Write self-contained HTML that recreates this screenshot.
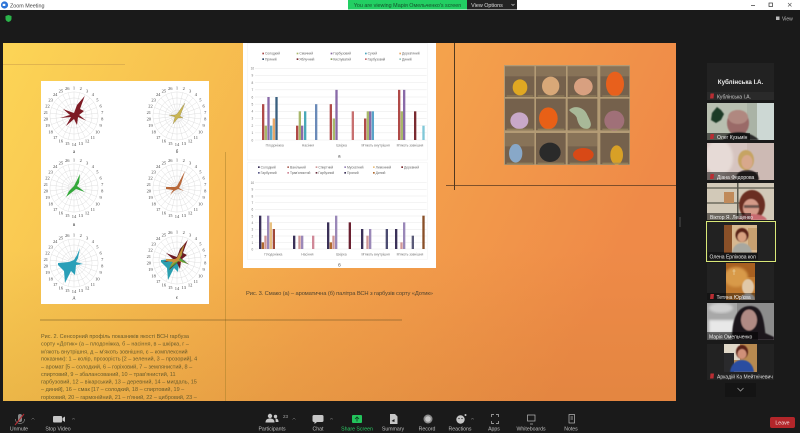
<!DOCTYPE html>
<html><head><meta charset="utf-8"><title>Zoom Meeting</title>
<style>
html,body{margin:0;padding:0;width:800px;height:433px;overflow:hidden;background:#1a1a1a}
svg{display:block;font-family:"Liberation Sans","Noto Sans CJK SC",sans-serif}
</style></head><body>
<svg width="800" height="433" viewBox="0 0 800 433" xmlns="http://www.w3.org/2000/svg">
<defs>
<linearGradient id="sl" x1="0" y1="0" x2="1" y2="0.25">
<stop offset="0" stop-color="#fcd556"/><stop offset=".3" stop-color="#f7bf4f"/><stop offset=".62" stop-color="#f4a24c"/><stop offset="1" stop-color="#ef8a48"/>
</linearGradient>
<linearGradient id="dk" x1="0" y1="0" x2="0" y2="1"><stop offset="0" stop-color="#a8701a" stop-opacity="0"/><stop offset="1" stop-color="#a8701a" stop-opacity=".16"/></linearGradient>
<filter id="b1"><feGaussianBlur stdDeviation=".6"/></filter>
<filter id="b2"><feGaussianBlur stdDeviation="1.2"/></filter>
<g id="radar">
<g stroke="#d6d6d6" stroke-width=".45" fill="none">
<circle r="28"/><circle r="21"/><circle r="14"/><circle r="7"/>
<path d="M0-28V28M6.7-27.2L-6.7 27.2M13-24.8L-13 24.8M18.6-21L-18.6 21M23-15.9L-23 15.9M26.2-9.9L-26.2 9.9M27.8-3.4L-27.8 3.4M27.8 3.4L-27.8-3.4M26.2 9.9L-26.2-9.9M23 15.9L-23-15.9M18.6 21L-18.6-21M13 24.8L-13-24.8M6.7 27.2L-6.7-27.2"/>
</g>
<g font-size="5.200" fill="#444" text-anchor="middle" font-family="Liberation Serif, serif">
<text x="0" y="-31">1</text><text x="7.900" y="-30">2</text><text x="15.300" y="-27.500">3</text><text x="21.900" y="-23">4</text><text x="27.200" y="-17">5</text><text x="30.900" y="-10">6</text><text x="32.800" y="-2.500">7</text><text x="32.800" y="5.500">8</text><text x="30.900" y="13">9</text><text x="27.200" y="20.500">10</text><text x="21.900" y="26.500">11</text><text x="15.300" y="31">12</text><text x="7.900" y="34">13</text><text x="0" y="35">14</text><text x="-7.900" y="34">15</text><text x="-15.300" y="31">16</text><text x="-21.900" y="26.500">17</text><text x="-27.200" y="20.500">18</text><text x="-30.900" y="13">19</text><text x="-32.800" y="5.500">20</text><text x="-32.800" y="-2.500">21</text><text x="-30.900" y="-10">22</text><text x="-27.200" y="-17">23</text><text x="-21.900" y="-23">24</text><text x="-15.300" y="-27.500">25</text><text x="-7.900" y="-30">26</text>
</g>
</g>
<path id="stA" d="M0-3L3-11L10.700-20L6-7L10-5L5-1L12 4.500L4 1L3 9L0 3L-8 10L-3 1L-14 2L-4-1L-11-7L-3-4Z"/>
<path id="stB" d="M0-2L8-13L3 0L6 2L1 2L-4 8L-2 1L-8-1L-2-1Z"/>
<path id="stC" d="M0-2L3-8L6-14L5-5L3-2L11 4L2 1L-3 5L-8 9L-5 3L-2 0Z"/>
<path id="stD" d="M0-2L8-17L4-4L2 0L7 3L1 1L-3 3L-7 7L-4 2L-11 1L-11-1L-2-1Z"/>
<path id="stE" d="M0-3L3-8L6-15L4-5L2-1L9 1L2 2L1 12L-3 8L-9 20L-10 8L-16 2L-16 0L-5-1Z"/>
</defs>

<!-- base -->
<rect width="800" height="433" fill="#1a1a1a"/>
<rect width="800" height="10" fill="#fff"/>
<circle cx="4.500" cy="5" r="3.600" fill="#2d74d8"/><rect x="2.700" y="3.800" width="2.600" height="2.200" fill="#fff"/>
<text x="10" y="7.500" font-size="5.400" fill="#444">Zoom Meeting</text>
<path d="M751 5.500h4" stroke="#333" stroke-width=".7"/>
<rect x="769" y="3" width="3.500" height="3.500" fill="none" stroke="#333" stroke-width=".7"/>
<path d="M788 3l3.500 3.500M791.500 3L788 6.500" stroke="#555" stroke-width=".6"/>

<rect x="348" y="0" width="119" height="9.500" fill="#22cf63"/>
<text x="407.500" y="7" font-size="5.400" text-anchor="middle" fill="#17502c">You are viewing Марія Омельченко's screen</text>
<rect x="467" y="0" width="50" height="9.500" fill="#232323"/>
<text x="487" y="7" font-size="5.400" text-anchor="middle" fill="#ddd">View Options</text>
<path d="M511.500 4l1.500 1.500L514.500 4" stroke="#ddd" stroke-width=".6" fill="none"/>

<path d="M8.500 15l3 1v2.500c0 2-1.500 3-3 3.500c-1.500-.5-3-1.500-3-3.500V16z" fill="#2bb44a"/>
<rect x="776" y="16.500" width="3.500" height="3.500" fill="#bbb"/>
<text x="782" y="20.500" font-size="5" fill="#bbb">View</text>

<!-- slide -->
<rect x="3" y="43" width="673" height="358" fill="url(#sl)"/>
<rect x="3" y="250" width="673" height="151" fill="url(#dk)"/>
<g fill="none">
<path d="M3 64.500H125" stroke="#c79a4a" stroke-width=".6"/>
<path d="M225.500 152V401" stroke="#a8802a" stroke-width=".5"/>
<path d="M40 320H402" stroke="#5f4a20" stroke-width=".6"/>
<path d="M454.500 43V190" stroke="#2a2015" stroke-width=".8"/>
<path d="M446 185.500H676" stroke="#5a3a20" stroke-width=".7"/>
</g>

<!-- radars -->
<rect x="41" y="81" width="168" height="223" fill="#fff"/>
<use href="#radar" transform="translate(74,116) scale(.86)"/>
<use href="#radar" transform="translate(177,116) scale(.86)"/>
<use href="#radar" transform="translate(74,188) scale(.86)"/>
<use href="#radar" transform="translate(177,188) scale(.86)"/>
<use href="#radar" transform="translate(74,263) scale(.86)"/>
<use href="#radar" transform="translate(177,260) scale(.86)"/>
<use href="#stA" x="74" y="116" fill="#7d1a24"/>
<use href="#stB" x="177" y="116" fill="#c9b552" stroke="#6a5a30" stroke-width=".2"/>
<use href="#stC" x="74" y="188" fill="#33a83a"/>
<use href="#stD" x="177" y="188" fill="#b8683a"/>
<use href="#stE" x="74" y="263" fill="#2a9fb8"/>
<use href="#stE" x="177" y="260" fill="#2a9fb0"/>
<use href="#stA" x="177" y="260" fill="#6d1a24"/>
<use href="#stC" x="177" y="260" fill="#56a83a"/>
<use href="#stD" x="177" y="260" fill="#c8903a"/>
<g font-size="5" fill="#333" text-anchor="middle" font-family="Liberation Serif, serif">
<text x="74" y="153">а</text><text x="177" y="153">б</text><text x="74" y="226">в</text><text x="74" y="299">д</text><text x="177" y="299">є</text>
</g>

<!-- charts panel -->
<rect x="243" y="43" width="193" height="225" fill="#fff"/>
<!-- Chart A -->
<g transform="translate(240,40) scale(.33333)">
<rect x="22" y="10" width="540" height="350" fill="none" stroke="#efefef" stroke-width="1.500"/>
<g stroke="#e2e2e2" stroke-width="1.200">
<path d="M45 85H560M45 106.500H560M45 128H560M45 149.500H560M45 171H560M45 192.500H560M45 214H560M45 235.500H560M45 257H560M45 278.500H560M45 300H560"/>
</g>
<g font-size="9.500" fill="#777" text-anchor="middle">
<text x="37" y="89">10</text><text x="37" y="110">9</text><text x="37" y="132">8</text><text x="37" y="153">7</text><text x="37" y="175">6</text><text x="37" y="196">5</text><text x="37" y="218">4</text><text x="37" y="239">3</text><text x="37" y="261">2</text><text x="37" y="282">1</text><text x="37" y="304">0</text>
<text x="104" y="319" font-size="10">Плодоніжка</text><text x="204" y="319" font-size="10">Насіння</text><text x="305" y="319" font-size="10">Шкірка</text><text x="407" y="319" font-size="10">М'якоть внутрішня</text><text x="510" y="319" font-size="10">М'якоть зовнішня</text>
<text x="298" y="353" font-size="14" fill="#444">а</text>
</g>
<g font-size="10" fill="#666">
<rect x="67" y="38" width="5" height="5" fill="#a84646"/><text x="75" y="44">Солодкий</text>
<rect x="170" y="38" width="5" height="5" fill="#a9b86a"/><text x="178" y="44">Смачний</text>
<rect x="272" y="38" width="5" height="5" fill="#85659f"/><text x="280" y="44">Гарбузовий</text>
<rect x="375" y="38" width="5" height="5" fill="#4aa4bc"/><text x="383" y="44">Сухий</text>
<rect x="478" y="38" width="5" height="5" fill="#e8a868"/><text x="486" y="44">Дерев'яний</text>
<rect x="67" y="55" width="5" height="5" fill="#2c4a6a"/><text x="75" y="61">Пряний</text>
<rect x="170" y="55" width="5" height="5" fill="#7a2a30"/><text x="178" y="61">Яблучний</text>
<rect x="272" y="55" width="5" height="5" fill="#8aa060"/><text x="280" y="61">Кислуватий</text>
<rect x="375" y="55" width="5" height="5" fill="#c87070"/><text x="383" y="61">Гарбузовий</text>
<rect x="478" y="55" width="5" height="5" fill="#9ac8c0"/><text x="486" y="61">Диний</text>
</g>
<g>
<rect x="66" y="192.500" width="7" height="107.500" fill="#b04a48"/><rect x="74" y="257" width="7" height="43" fill="#a8b86a"/><rect x="82" y="171" width="7" height="129" fill="#8a6aa8"/><rect x="90" y="257" width="7" height="43" fill="#5aaac8"/><rect x="98" y="235.500" width="7" height="64.500" fill="#e8a868"/><rect x="106" y="171" width="7" height="129" fill="#3a6080"/>
<rect x="168" y="257" width="7" height="43" fill="#b04a48"/><rect x="176" y="214" width="7" height="86" fill="#a8b86a"/><rect x="183" y="257" width="7" height="43" fill="#8a6aa8"/><rect x="192" y="214" width="7" height="86" fill="#48a8b8"/><rect x="225" y="192.500" width="7" height="107.500" fill="#6a8ab8"/>
<rect x="269" y="192.500" width="7" height="107.500" fill="#b04a48"/><rect x="278" y="235.500" width="7" height="64.500" fill="#a8b86a"/><rect x="286" y="149.500" width="7" height="150.500" fill="#8a6aa8"/><rect x="335" y="214" width="7" height="86" fill="#c87070"/>
<rect x="372" y="235.500" width="7" height="64.500" fill="#b04a48"/><rect x="380" y="214" width="7" height="86" fill="#a8b86a"/><rect x="387" y="214" width="7" height="86" fill="#8a6aa8"/><rect x="395" y="214" width="7" height="86" fill="#5aa4c8"/>
<rect x="474" y="149.500" width="7" height="150.500" fill="#b04a48"/><rect x="482" y="214" width="7" height="86" fill="#a8b86a"/><rect x="489" y="149.500" width="7" height="150.500" fill="#8a6aa8"/><rect x="522" y="214" width="7" height="86" fill="#7a2a30"/><rect x="547" y="257" width="7" height="43" fill="#80c8d8"/>
</g>
</g>
<!-- Chart B -->
<g transform="translate(240,160) scale(.33333)">
<rect x="22" y="8" width="540" height="290" fill="none" stroke="#f0f0f0" stroke-width="1.500"/>
<g stroke="#e2e2e2" stroke-width="1.200">
<path d="M45 68H560M45 88H560M45 108H560M45 128H560M45 148H560M45 168H560M45 188H560M45 208H560M45 228H560M45 248H560M45 267H560"/>
</g>
<g font-size="9.500" fill="#777" text-anchor="middle">
<text x="37" y="72">10</text><text x="37" y="92">9</text><text x="37" y="112">8</text><text x="37" y="132">7</text><text x="37" y="152">6</text><text x="37" y="172">5</text><text x="37" y="192">4</text><text x="37" y="212">3</text><text x="37" y="232">2</text><text x="37" y="252">1</text><text x="37" y="271">0</text>
<text x="100" y="286" font-size="10">Плодоніжка</text><text x="202" y="286" font-size="10">Насіння</text><text x="304" y="286" font-size="10">Шкірка</text><text x="407" y="286" font-size="10">М'якоть внутрішня</text><text x="510" y="286" font-size="10">М'якоть зовнішня</text>
<text x="298" y="319" font-size="14" fill="#444">б</text>
</g>
<g font-size="10" fill="#666">
<rect x="54" y="19" width="5" height="5" fill="#3a3058"/><text x="62" y="25">Солодкий</text>
<rect x="142" y="19" width="5" height="5" fill="#b06a60"/><text x="150" y="25">Ванільний</text>
<rect x="227" y="19" width="5" height="5" fill="#d09898"/><text x="235" y="25">Спиртний</text>
<rect x="313" y="19" width="5" height="5" fill="#9a88b8"/><text x="321" y="25">Мускатний</text>
<rect x="399" y="19" width="5" height="5" fill="#e8c080"/><text x="407" y="25">Лимонний</text>
<rect x="484" y="19" width="5" height="5" fill="#7a2a30"/><text x="492" y="25">Деревний</text>
<rect x="54" y="36" width="5" height="5" fill="#5a5a88"/><text x="62" y="42">Гарбузний</text>
<rect x="142" y="36" width="5" height="5" fill="#d08898"/><text x="150" y="42">Трав'янистий</text>
<rect x="227" y="36" width="5" height="5" fill="#6a3040"/><text x="235" y="42">Гарбузний</text>
<rect x="313" y="36" width="5" height="5" fill="#3a3058"/><text x="321" y="42">Пряний</text>
<rect x="399" y="36" width="5" height="5" fill="#b06a30"/><text x="407" y="42">Диний</text>
</g>
<g>
<rect x="57" y="167" width="7" height="100" fill="#3a3058"/><rect x="65" y="247" width="7" height="20" fill="#b06a30"/><rect x="73" y="227" width="7" height="40" fill="#d09898"/><rect x="81" y="167" width="7" height="100" fill="#9a88b8"/><rect x="89" y="187" width="7" height="80" fill="#e8c080"/><rect x="98" y="207" width="7" height="60" fill="#a04838"/>
<rect x="159" y="227" width="7" height="40" fill="#3a3058"/><rect x="175" y="227" width="7" height="40" fill="#d09898"/><rect x="183" y="227" width="7" height="40" fill="#9a88b8"/><rect x="216" y="227" width="7" height="40" fill="#d08898"/>
<rect x="261" y="187" width="7" height="80" fill="#3a3058"/><rect x="269" y="247" width="7" height="20" fill="#b06a30"/><rect x="277" y="227" width="7" height="40" fill="#d09898"/><rect x="285" y="167" width="7" height="100" fill="#9a88b8"/><rect x="326" y="187" width="7" height="80" fill="#6a2030"/>
<rect x="363" y="207" width="7" height="60" fill="#3a3058"/><rect x="379" y="227" width="7" height="40" fill="#d09898"/><rect x="387" y="207" width="7" height="60" fill="#9a88b8"/><rect x="437" y="207" width="7" height="60" fill="#4a4a70"/>
<rect x="465" y="207" width="7" height="60" fill="#3a3058"/><rect x="481" y="247" width="7" height="20" fill="#d09898"/><rect x="489" y="187" width="7" height="80" fill="#9a88b8"/><rect x="515" y="227" width="7" height="40" fill="#5a5a78"/><rect x="547" y="167" width="7" height="100" fill="#8a5028"/>
</g>
</g>

<text x="246" y="295" font-size="5.800" fill="#54452e" textLength="187">Рис. 3. Смако (а) – ароматична (б) палітра ВСН з гарбузів сорту «Дотик»</text>

<!-- paragraph -->
<g font-size="5.500" fill="#6a5c2c">
<text x="41" y="338">Рис. 2. Сенсорний профіль показників якості ВСН гарбуза</text>
<text x="41" y="345.700">сорту «Дотик» (а – плодоніжка, б – насіння, в – шкірка, г –</text>
<text x="41" y="353.300">м'якоть внутрішня, д – м'якоть зовнішня, є – комплексний</text>
<text x="41" y="360.700">показник): 1 – колір, прозорість [2 – зелений, 3 – прозорий], 4</text>
<text x="41" y="368.300">– аромат [5 – солодкий, 6 – горіховий, 7 – землянистий, 8 –</text>
<text x="41" y="376">спиртовий, 9 – збалансований, 10 – трав'янистий, 11</text>
<text x="41" y="383.300">гарбузовий, 12 – вікарський, 13 – деревний, 14 – мигдаль, 15</text>
<text x="41" y="391">– диний], 16 – смак [17 – солодкий, 18 – спиртовий, 19 –</text>
<text x="41" y="399">горіховий, 20 – гармонійний, 21 – п'яний, 22 – цибровий, 23 –</text>
</g>

<!-- pumpkins -->
<g transform="translate(495,60) scale(.33333)">
<rect x="27" y="15" width="378" height="300" fill="#b39b75"/>
<g fill="#75614c">
<rect x="30" y="19" width="88" height="92"/><rect x="123" y="19" width="90" height="92"/><rect x="218" y="19" width="89" height="92"/><rect x="316" y="19" width="87" height="92"/>
<rect x="30" y="116" width="88" height="95"/><rect x="123" y="116" width="89" height="95"/><rect x="218" y="116" width="89" height="95"/><rect x="316" y="116" width="87" height="95"/>
<rect x="30" y="219" width="88" height="94"/><rect x="123" y="219" width="89" height="94"/><rect x="218" y="219" width="89" height="94"/><rect x="316" y="219" width="87" height="94"/>
</g>
<g fill="#a08a68"><rect x="30" y="19" width="88" height="30" opacity=".45"/><rect x="123" y="19" width="90" height="30" opacity=".45"/><rect x="218" y="19" width="89" height="30" opacity=".45"/><rect x="316" y="19" width="87" height="30" opacity=".45"/><rect x="30" y="219" width="88" height="40" opacity=".45"/><rect x="218" y="219" width="89" height="40" opacity=".45"/></g>
<g filter="url(#b1)">
<ellipse cx="75" cy="82" rx="22" ry="24" fill="#e0a820"/>
<ellipse cx="167" cy="78" rx="26" ry="28" fill="#d8a878"/>
<ellipse cx="265" cy="80" rx="28" ry="26" fill="#d8a080"/>
<ellipse cx="360" cy="72" rx="27" ry="37" fill="#e8601c"/>
<ellipse cx="73" cy="182" rx="27" ry="25" fill="#c8a8c8"/>
<ellipse cx="160" cy="175" rx="28" ry="33" fill="#e86018"/>
<path d="M222 150c15-15 45-10 55 15c10 20 18 35 0 42c-20 0-28-15-32-35c-5-10-15-12-23-22z" fill="#a8b898"/>
<ellipse cx="358" cy="182" rx="30" ry="30" fill="#a07078"/>
<ellipse cx="62" cy="280" rx="20" ry="28" fill="#88a8c8"/>
<ellipse cx="165" cy="277" rx="32" ry="29" fill="#2a2a2c"/>
<ellipse cx="265" cy="284" rx="31" ry="20" fill="#d84818"/>
<ellipse cx="365" cy="285" rx="19" ry="29" fill="#d8a028"/>
</g>
<g stroke="#9a8a60" stroke-width="4" opacity=".7"><path d="M35 108H115M128 108H208M224 108H304M322 108H400M35 208H115M128 208H208M224 208H304M322 208H400M35 310H115M128 310H208M224 310H304M322 310H400"/></g>
</g>

<path d="M680 217V227" stroke="#666" stroke-width=".7"/>

<!-- participant tiles -->
<rect x="707" y="63" width="67" height="37" fill="#222"/>
<text x="740.500" y="84" font-size="6.200" font-weight="bold" fill="#eee" text-anchor="middle">Кублінська І.А.</text>
<rect x="707" y="92" width="67" height="8" fill="#2a2a2a"/>
<path d="M710.500 93.500h3.500l-.5 5h-3.500z" fill="#b92d33"/>
<text x="717" y="98.500" font-size="5" fill="#ccc">Кублінська І.А.</text>

<!-- tile 2 -->
<svg x="707" y="103" width="67" height="37" viewBox="0 0 67 37">
<rect width="67" height="37" fill="#aab3a6"/><rect x="50" width="17" height="37" fill="#cdd8d4"/><rect x="0" width="40" height="37" fill="#b8bfb0"/>
<g filter="url(#b1)"><path d="M5 10l5-6 4 3 3 4-3 6-5 3-5-3z" fill="#1f3a28"/>
<ellipse cx="31" cy="20" rx="11" ry="13" fill="#9a6a68"/><ellipse cx="31" cy="14" rx="10" ry="7" fill="#b08880"/>
<path d="M16 37c2-6 10-8 16-8s14 2 20 8z" fill="#2a2a2a"/></g>
<rect x="0" y="30" width="43" height="7" fill="#000" opacity=".55"/>
<path d="M3.500 31h3.500l-.5 5h-3.500z" fill="#b92d33"/>
<text x="10" y="36" font-size="5" fill="#eee">Олег Кузьмін</text>
</svg>

<!-- tile 3 -->
<svg x="707" y="143" width="67" height="37" viewBox="0 0 67 37">
<rect width="67" height="37" fill="#d6c4c0"/><rect x="40" width="27" height="37" fill="#cdbab4"/><ellipse cx="12" cy="15" rx="14" ry="18" fill="#e6dad6" filter="url(#b2)"/>
<g filter="url(#b1)"><ellipse cx="39" cy="17" rx="8" ry="10" fill="#c6a464"/><ellipse cx="40" cy="19" rx="5.500" ry="7" fill="#d8a88c"/>
<path d="M28 37c1-7 6-10 12-10s12 3 12 10z" fill="#3a3030"/></g>
<rect x="0" y="29" width="51" height="8" fill="#000" opacity=".5"/>
<path d="M3.500 31h3.500l-.5 5h-3.500z" fill="#b92d33"/>
<text x="10" y="36" font-size="5" fill="#eee">Діана Федорова</text>
</svg>

<!-- tile 4 -->
<svg x="707" y="183" width="67" height="37" viewBox="0 0 67 37">
<rect width="67" height="37" fill="#d2c9b8"/><path d="M0 5H67M0 20H40" stroke="#3a3a30" stroke-width="1"/><rect x="17" y="9" width="10" height="11" fill="#c08a5a"/><rect x="30" y="0" width="1.500" height="37" fill="#5a5a50"/>
<g filter="url(#b1)"><ellipse cx="45" cy="22" rx="13" ry="15" fill="#6a2e20"/><ellipse cx="44" cy="25" rx="8" ry="9" fill="#d49a88"/><rect x="37" y="22" width="15" height="3" fill="#2a2a2a" opacity=".6"/>
<path d="M30 37c3-5 8-6 14-6s14 1 16 6z" fill="#c86a70"/></g>
<rect x="0" y="30" width="44" height="7" fill="#000" opacity=".5"/>
<text x="3" y="36" font-size="5" fill="#eee">Віктор Я. Лещенко</text>
</svg>

<!-- tile 5 active -->
<rect x="706.500" y="221.500" width="69" height="40" fill="#222" stroke="#d9e878" stroke-width="1"/>
<svg x="724" y="225" width="33" height="28" viewBox="0 0 33 28">
<rect width="33" height="28" fill="#d8b890"/><rect width="8" height="28" fill="#8a5028"/><rect x="24" y="3" width="9" height="22" fill="#c8a070"/>
<g filter="url(#b1)"><ellipse cx="18" cy="10" rx="6.500" ry="7" fill="#5a2018"/><ellipse cx="18" cy="12" rx="4.500" ry="5" fill="#d8a080"/>
<path d="M8 28c1-7 5-10 10-10s9 3 10 10z" fill="#a8a8a0"/></g>
</svg>
<rect x="708" y="252" width="50" height="8" fill="#000" opacity=".35"/>
<text x="709.500" y="258.500" font-size="5" fill="#eee">Олена Ерліхова кол</text>

<!-- tile 6 -->
<rect x="707" y="263" width="67" height="37" fill="#222"/>
<svg x="726" y="263" width="29" height="37" viewBox="0 0 29 37">
<rect width="29" height="37" fill="#c07a30"/><rect width="29" height="14" fill="#a86020"/><ellipse cx="10" cy="14" rx="12" ry="10" fill="#d89a4a" filter="url(#b2)"/><path d="M8 6v6M6.500 8h3" stroke="#e8d0a0" stroke-width=".7"/>
<g filter="url(#b1)"><ellipse cx="22" cy="24" rx="6" ry="8" fill="#e0c8a8"/><path d="M14 37c1-5 4-6 8-6s7 1 7 6z" fill="#d8d8d8"/></g>
</svg>
<rect x="707" y="293" width="48" height="7" fill="#000" opacity=".4"/>
<path d="M710.500 294h3.500l-.5 5h-3.500z" fill="#b92d33"/>
<text x="716.500" y="299" font-size="5" fill="#eee">Тетяна Юрʼєва</text>

<!-- tile 7 -->
<svg x="707" y="303" width="67" height="37" viewBox="0 0 67 37">
<rect width="67" height="37" fill="#8c8c8c"/><rect width="30" height="37" fill="#a8a8a8"/><rect x="2" y="17" width="26" height="13" fill="#e8e8e8" filter="url(#b2)"/><ellipse cx="14" cy="5" rx="12" ry="5" fill="#d0d0d0" filter="url(#b2)"/>
<g filter="url(#b1)"><path d="M25 37c0-14 2-34 18-34c13 0 14 14 16 34z" fill="#1b141c"/><ellipse cx="42" cy="17" rx="8" ry="10.500" fill="#b08a84"/><path d="M58 30l9 4v3H50z" fill="#1b141c"/></g>
<rect x="0" y="29" width="51" height="8" fill="#000" opacity=".5"/>
<text x="2" y="35.500" font-size="5" fill="#eee">Марія Омельченко</text>
</svg>

<!-- tile 8 -->
<rect x="707" y="344" width="67" height="36" fill="#222"/>
<svg x="724" y="344" width="33" height="28" viewBox="0 0 33 28">
<rect width="33" height="28" fill="#b88a50"/><rect width="16" height="16" fill="#e0d8c8"/><rect x="0" y="9" width="10" height="19" fill="#2a2a2c"/>
<g filter="url(#b1)"><ellipse cx="18" cy="8" rx="6" ry="7" fill="#5a2018"/><ellipse cx="18" cy="10" rx="4.500" ry="5" fill="#d09078"/><path d="M6 28c1-8 6-12 12-12s11 4 12 12z" fill="#2a4ea0"/></g>
</svg>
<path d="M710.500 373.500h3.500l-.5 5h-3.500z" fill="#b92d33"/>
<text x="717" y="378.500" font-size="5" fill="#ddd">Аркадій Ка Мейтнічевич</text>

<rect x="725" y="383" width="31" height="14" fill="#141414"/>
<path d="M737.500 388l3 3l3-3" stroke="#999" stroke-width=".8" fill="none"/>

<!-- toolbar dark strip -->
<rect x="0" y="401" width="700" height="32" fill="#1a1a1a"/>

<!-- Toolbar icons -->
<g fill="#c6c6c6">
<rect x="18" y="414" width="4" height="8" rx="2" fill="#888"/><path d="M15.500 419c0 3 2 4.500 4.500 4.500s4.500-1.500 4.500-4.500" stroke="#888" stroke-width=".7" fill="none"/>
<path d="M15 425L24 414" stroke="#b52a30" stroke-width="1"/>
<rect x="53" y="416" width="9" height="6.500" rx="1"/><path d="M62.500 418l2.500-1.500v5.500l-2.500-1.500z"/>
<circle cx="270" cy="416" r="2.200"/><path d="M265.500 422.500c0-3 2-4 4.500-4s4.500 1 4.500 4z"/><circle cx="275.500" cy="416.500" r="1.700"/><path d="M275.500 418.500c2 0 3 1 3 3.500h-2.800z"/>
<path d="M314 415h8a1.500 1.500 0 0 1 1.500 1.500v4a1.500 1.500 0 0 1-1.500 1.500h-5l-2.500 2v-2a1.500 1.500 0 0 1-2-1.500v-4a1.500 1.500 0 0 1 1.500-1.500z"/>
<path d="M390 414h5l2.500 2.500v7.500h-7.500z"/>
<circle cx="428" cy="419" r="4.500" fill="#8a8a8a"/><circle cx="428" cy="419" r="2.800"/>
<circle cx="460.500" cy="419.500" r="4.200"/><circle cx="465.500" cy="415" r="1"/>
</g>
<circle cx="459" cy="418.500" r=".6" fill="#1a1a1a"/><circle cx="462" cy="418.500" r=".6" fill="#1a1a1a"/>
<path d="M391.500 421l3-2v3z" fill="#1a1a1a"/>
<rect x="352" y="415" width="10" height="8" rx="1" fill="#23c45c"/><path d="M357 421.500v-4M355 419l2-2l2 2" stroke="#0d3a1d" stroke-width=".8" fill="none"/>
<g fill="none" stroke="#bdbdbd" stroke-width=".7">
<path d="M491.500 417v-2.500h2.500M496 414.500h2.500v2.500M498.500 421v2.500H496M494 423.500h-2.500V421"/>
<rect x="527.500" y="415" width="7.500" height="6"/><path d="M530 424h3"/>
<rect x="569" y="414.500" width="5.500" height="8.500"/><path d="M570.500 417h2.500M570.500 419h2.500"/>
</g>
<g fill="none" stroke="#888" stroke-width=".5">
<path d="M31.500 419.500l1.500-1.500l1.500 1.500M72 419.500l1.500-1.500l1.500 1.500M292.500 419.500l1.500-1.500l1.500 1.500M330 419.500l1.500-1.500l1.500 1.500M471 419.500l1.500-1.500l1.500 1.500"/>
</g>
<text x="283" y="418" font-size="4.500" fill="#aaa">23</text>

<g font-size="5.200" fill="#bfbfbf" text-anchor="middle">
<text x="19" y="430.500">Unmute</text>
<text x="58" y="430.500">Stop Video</text>
<text x="272" y="430.500">Participants</text>
<text x="318" y="430.500">Chat</text>
<text x="357" y="430.500" fill="#2dcb66">Share Screen</text>
<text x="393" y="430.500">Summary</text>
<text x="427" y="430.500">Record</text>
<text x="460" y="430.500">Reactions</text>
<text x="494" y="430.500">Apps</text>
<text x="531" y="430.500">Whiteboards</text>
<text x="571" y="430.500">Notes</text>
</g>

<rect x="770" y="417" width="25" height="11" rx="2" fill="#b3262a"/>
<text x="782.500" y="424.500" font-size="5.200" fill="#f3e3e3" text-anchor="middle">Leave</text>
</svg>
</body></html>
